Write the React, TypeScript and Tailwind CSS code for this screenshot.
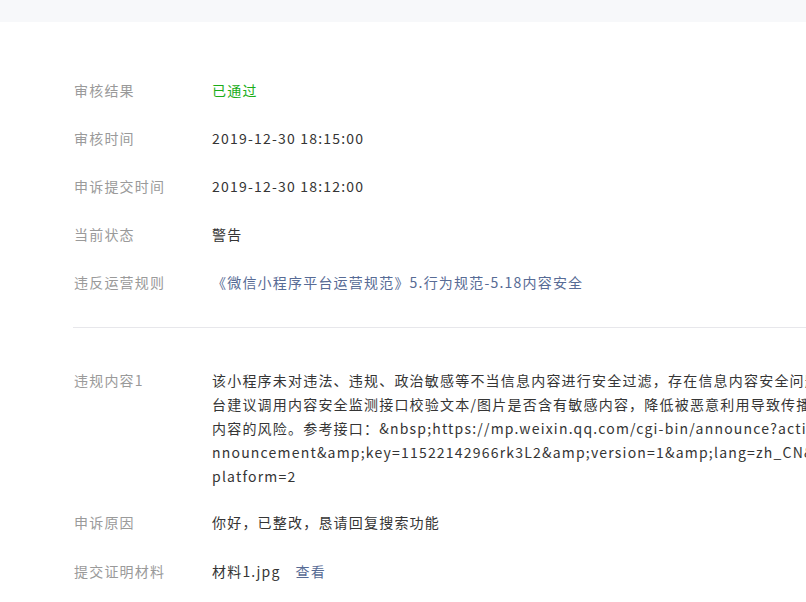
const rows = [
  { label: '审核结果', value: <span className="text-[#1aad19]">已通过</span> },
  { label: '审核时间', value: '2019-12-30 18:15:00' },
  { label: '申诉提交时间', value: '2019-12-30 18:12:00' },
  { label: '当前状态', value: '警告' },
  {
    label: '违反运营规则',
    value: <span className="text-[#576b95]">《微信小程序平台运营规范》5.行为规范-5.18内容安全</span>,
  },
]

// content wraps past the right edge in the screenshot, so lines are split by hand
const contentLines = [
  '该小程序未对违法、违规、政治敏感等不当信息内容进行安全过滤，存在信息内容安全问题，平',
  '台建议调用内容安全监测接口校验文本/图片是否含有敏感内容，降低被恶意利用导致传播违规',
  '内容的风险。参考接口：&nbsp;https://mp.weixin.qq.com/cgi-bin/announce?action=geta',
  'nnouncement&amp;key=11522142966rk3L2&amp;version=1&amp;lang=zh_CN&amp;',
  'platform=2',
]

function Row({ label, children, className = '' }: { label: string; children: React.ReactNode; className?: string }) {
  return (
    <div className={`flex leading-6 ${className}`}>
      <div className="w-[138px] shrink-0 text-[#9a9a9a]">{label}</div>
      <div className="text-[#353535] whitespace-nowrap">{children}</div>
    </div>
  )
}

export default function App() {
  return (
    <div
      className="w-[806px] h-[602px] overflow-hidden bg-white text-[14px] tracking-[1.2px]"
      style={{ fontFamily: '"Noto Sans CJK SC", "Noto Sans", sans-serif' }}
    >
      <div className="h-[22px] bg-[#f7f8fa]" />

      <div className="pl-[74px] pt-[56px] flex flex-col gap-6">
        {rows.map((r) => (
          <Row key={r.label} label={r.label}>
            {r.value}
          </Row>
        ))}
      </div>

      <div className="ml-[73px] mt-[33px] h-px bg-[#e7e7eb]" />

      <div className="pl-[74px] pt-[40px] flex flex-col">
        <Row label="违规内容1">
          {contentLines.map((l, i) => (
            <div key={i}>{l}</div>
          ))}
        </Row>
        <Row label="申诉原因" className="mt-[22px]">
          你好，已整改，恳请回复搜索功能
        </Row>
        <Row label="提交证明材料" className="mt-[25px]">
          材料1.jpg<span className="ml-[15px] text-[#576b95]">查看</span>
        </Row>
      </div>
    </div>
  )
}
